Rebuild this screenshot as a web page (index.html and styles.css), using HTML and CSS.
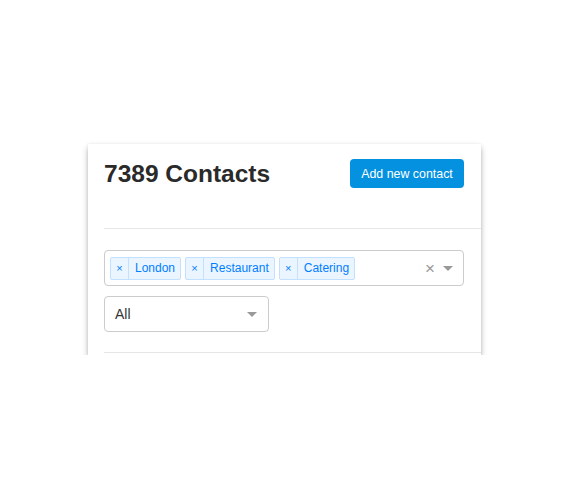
FILE: index.html
```html
<!DOCTYPE html>
<html>
<head>
<meta charset="utf-8">
<link rel="stylesheet" href="styles.css">
</head>
<body>
<div class="page">
  <div class="card">
    <div class="header">
      <h1 class="title">7389 Contacts</h1>
      <button class="btn">Add new contact</button>
    </div>
    <div class="filters">
      <div class="multi">
        <div class="tags">
          <span class="tag"><span class="tag-x">×</span><span class="tag-label">London</span></span>
          <span class="tag"><span class="tag-x">×</span><span class="tag-label">Restaurant</span></span>
          <span class="tag"><span class="tag-x">×</span><span class="tag-label">Catering</span></span>
        </div>
        <span class="clear">×</span>
        <span class="arrow"></span>
      </div>
      <div class="single">
        <span class="value">All</span>
        <span class="arrow"></span>
      </div>
    </div>
    <div class="bottom-line"></div>
  </div>
</div>
</body>
</html>
```
FILE: styles.css
```css
* { box-sizing: border-box; }
body {
  margin: 0;
  background: #fff;
  font-family: "Liberation Sans", Arial, sans-serif;
  color: #333;
}
.page {
  padding: 144px 0 0 88px;
}
.card {
  width: 393px;
  height: 211px;
  background: #fff;
  box-shadow: 0 4px 6px rgba(0,0,0,0.28), 0 0 3px rgba(0,0,0,0.08);
}
.header {
  display: flex;
  justify-content: space-between;
  align-items: flex-start;
  padding: 15px 17px 0 0;
  height: 85px;
  border-bottom: 1px solid #e6e6e6;
  margin-left: 16px;
}
.title {
  margin: 0;
  font-size: 24.5px;
  font-weight: bold;
  color: #2a2a2a;
  line-height: 30px;
}
.btn {
  border: none;
  background: #0391e0;
  color: #fff;
  font-family: "Liberation Sans", Arial, sans-serif;
  font-size: 12.4px;
  height: 29px;
  width: 114px;
  border-radius: 4px;
  padding: 0;
}
.filters {
  padding: 21px 17px 0 16px;
  display: flex;
  flex-direction: column;
  gap: 10px;
}
.multi {
  height: 36px;
  border: 1px solid #ccc;
  border-radius: 4px;
  display: flex;
  align-items: center;
  padding: 0 10px 0 5px;
}
.tags {
  display: flex;
  gap: 4px;
  flex: 1;
}
.tag {
  display: flex;
  height: 23px;
  background: #ebf5ff;
  border: 1px solid #c2e0ff;
  border-radius: 2px;
  color: #007eff;
  font-size: 12px;
  align-items: stretch;
}
.tag-x {
  width: 18px;
  display: flex;
  align-items: center;
  justify-content: center;
  border-right: 1px solid #c2e0ff;
  font-size: 11px;
}
.tag-label {
  display: flex;
  align-items: center;
  padding: 0 5px 0 6px;
}
.clear {
  color: #999;
  font-size: 17px;
  margin-right: 8px;
  line-height: 1;
}
.arrow {
  width: 0;
  height: 0;
  border-left: 5px solid transparent;
  border-right: 5px solid transparent;
  border-top: 5px solid #999;
}
.single {
  width: 165px;
  height: 36px;
  border: 1px solid #ccc;
  border-radius: 4px;
  display: flex;
  align-items: center;
  justify-content: space-between;
  padding: 0 11px 0 10px;
  font-size: 14px;
  color: #333;
}
.bottom-line {
  margin: 20px 0 0 16px;
  border-top: 1px solid #e6e6e6;
}
```
